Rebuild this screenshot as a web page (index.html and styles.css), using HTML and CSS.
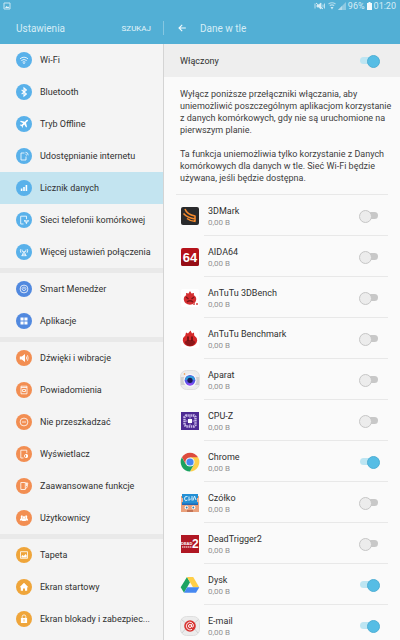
FILE: index.html
```html
<!DOCTYPE html>
<html lang="pl">
<head>
    <meta charset="UTF-8">
    <meta name="viewport" content="width=device-width, initial-scale=1.0">
    <title>Ustawienia</title>
    <link rel="stylesheet" href="styles.css">
</head>
<body>

<div class="app">
    <header class="header">
        <div class="status-bar">
            <svg class="status-icon" viewBox="0 0 8 8"><path d="M1 1h6v6H1z" fill="none" stroke="#c8e6f2"/><path d="M2 6l1.500-2 1 1 .7-.6L6.500 6z" fill="#e4f3f9"/></svg>
            <div class="status-right">
                <svg class="status-mute" viewBox="0 0 12 8"><path d="M1 1.500v5M3 3h1.500L7 1v6L4.500 5H3zM9 2.500v3M10.500 1.500v5" fill="#d8eef6" stroke="#d8eef6" stroke-width=".8"/><path d="M2 1l7 6" stroke="#d8eef6"/></svg>
                <svg class="status-icon" viewBox="0 0 8 8"><path d="M.5 2q3.500-2.500 7 0M1.800 3.700q2.200-1.600 4.400 0" fill="none" stroke="#b4dcec" stroke-width="1.100"/><path d="M2.500 5h3L4 7.500z" fill="#d0eaf4"/></svg>
                <svg class="status-icon" viewBox="0 0 8 8"><path d="M0 8l8-8v8z" fill="#8ecae2"/><path d="M0 8l4-4v4z" fill="#b4dcec"/></svg>
                <span>96%</span>
                <svg class="status-battery" viewBox="0 0 5 8"><path d="M1.500 0h2v1H5v7H0V1h1.500z" fill="#f4fafc"/></svg>
                <span>01:20</span>
            </div>
        </div>
        <div class="app-bar">
            <div class="bar-left">
                <h1>Ustawienia</h1>
                <button class="search-button" type="button">SZUKAJ</button>
            </div>
            <div class="bar-right">
                <button class="back-button" type="button" aria-label="Wstecz">
                    <svg viewBox="0 0 8 8"><path d="M7.800 4H1M4.200.8L1 4l3.200 3.200" fill="none" stroke="#f2fafd" stroke-width="1.100"/></svg>
                </button>
                <h2>Dane w tle</h2>
            </div>
        </div>
    </header>

    <div class="panes">
        <nav class="sidebar">
            <ul class="menu-group blue">
                <li><a class="menu-item" href="#wifi">
                    <svg viewBox="0 0 16 16"><path d="M4 6.800q4-3.200 8 0M5.300 8.500q2.700-2.100 5.400 0M6.600 10.200q1.400-1 2.800 0" /><circle class="solid" cx="8" cy="11.200" r=".7"/></svg>
                    <span>Wi-Fi</span></a></li>
                <li><a class="menu-item" href="#bluetooth">
                    <svg viewBox="0 0 16 16"><path d="M5.600 5.900l4.800 4.100L8 12V4l2.400 2-4.800 4.100" stroke-width="1.100"/></svg>
                    <span>Bluetooth</span></a></li>
                <li><a class="menu-item" href="#offline">
                    <svg viewBox="0 0 16 16"><path class="solid" d="M12 4q-1-.5-2 .5L8.800 5.700 4.800 4.700l-.8.800 3.200 1.800-1.500 1.500-1.300-.2-.6.600 1.700.9.900 1.700.6-.6-.2-1.300 1.500-1.500 1.900 3.200.8-.8-1-4 1.300-1.200q1-1 .7-1.600z"/></svg>
                    <span>Tryb Offline</span></a></li>
                <li><a class="menu-item" href="#tethering">
                    <svg viewBox="0 0 16 16"><path d="M8.500 5H5v7h5V8.500M9.500 6.200q1 0 1 1.300M9.500 4.300q2.700 0 2.700 3"/></svg>
                    <span>Udostępnianie internetu</span></a></li>
                <li><a class="menu-item active" href="#data">
                    <svg viewBox="0 0 16 16"><path class="solid" d="M4.800 8.500h1.600V11H4.800zM7.200 7h1.600v4H7.200zM9.600 5h1.600v6H9.600z"/></svg>
                    <span>Licznik danych</span></a></li>
                <li><a class="menu-item" href="#mobile">
                    <svg viewBox="0 0 16 16"><path d="M7.500 12H4.700V4.200h5.800v3M10.400 12V9.500M8.500 8v1.200q0 1 1.900 1t1.900-1V8M9.700 8v1.500M11.200 8v1.500"/></svg>
                    <span>Sieci telefonii komórkowej</span></a></li>
                <li><a class="menu-item" href="#more">
                    <svg viewBox="0 0 16 16"><path d="M5 5q-1.500 1.800 0 3.800M11 5q1.500 1.800 0 3.800M6.500 5.800q-.8 1 0 2.200M9.500 5.800q.8 1 0 2.200M8 7l-2 5M8 7l2 5M6.500 10.200h3M5.500 11.700h5"/></svg>
                    <span>Więcej ustawień połączenia</span></a></li>
            </ul>
            <ul class="menu-group navy">
                <li><a class="menu-item" href="#smart">
                    <svg viewBox="0 0 16 16"><circle cx="8" cy="8" r="3.900"/><path d="M7 6.200q-1.400 1-.7 2.500 1.700 1.800 3.400 0 .7-1.500-.7-2.500M8 5.500V8"/></svg>
                    <span>Smart Menedżer</span></a></li>
                <li><a class="menu-item" href="#apps">
                    <svg viewBox="0 0 16 16"><path class="solid" d="M4.500 4.500h3.100v3.100H4.500zM8.400 4.500h3.100v3.100H8.400zM4.500 8.400h3.100v3.100H4.500zM8.400 8.400h3.100v3.100H8.400z"/></svg>
                    <span>Aplikacje</span></a></li>
            </ul>
            <ul class="menu-group orange">
                <li><a class="menu-item" href="#sound">
                    <svg viewBox="0 0 16 16"><path class="solid" d="M3.800 6.500h2L9 4v8L5.800 9.500h-2z"/><path d="M10.300 6.500q.6 1.500 0 3M11.500 5.200q1.300 2.800 0 5.600"/></svg>
                    <span>Dźwięki i wibracje</span></a></li>
                <li><a class="menu-item" href="#notifications">
                    <svg viewBox="0 0 16 16"><path d="M5 4.200h6v7.600H5zM5 5.500h6M6.500 7.500h3v2h-3z"/></svg>
                    <span>Powiadomienia</span></a></li>
                <li><a class="menu-item" href="#dnd">
                    <svg viewBox="0 0 16 16"><circle cx="8" cy="8" r="3.900"/><path d="M6 8h4"/></svg>
                    <span>Nie przeszkadzać</span></a></li>
                <li><a class="menu-item" href="#display">
                    <svg viewBox="0 0 16 16"><path d="M7.500 12H4.800V4.200h6v3"/><circle cx="10" cy="10" r="1.600"/><path class="solid" d="M10 8a2 2 0 0 1 0 4z"/></svg>
                    <span>Wyświetlacz</span></a></li>
                <li><a class="menu-item" href="#advanced">
                    <svg viewBox="0 0 16 16"><path d="M4.800 4.500h4.500v7H4.800zM9.300 5h2.500L11 9.500l-1.700 1M10.500 5v3"/></svg>
                    <span>Zaawansowane funkcje</span></a></li>
                <li><a class="menu-item" href="#users">
                    <svg viewBox="0 0 16 16"><path class="solid" d="M5.500 5.200a1.200 1.200 0 0 1 1 2L6.800 8.500 5.800 10.500H3.800q0-1.800 1.200-2.300-.8-2 .5-3zM10.500 5.200a1.200 1.200 0 0 0-1 2l-.3 1.300 1 2h2q0-1.800-1.200-2.300.8-2-.5-3zM8 6a1.200 1.400 0 0 1 .6 2.500q1.400.4 1.400 2.500H6q0-2.100 1.400-2.500A1.200 1.400 0 0 1 8 6z" /></svg>
                    <span>Użytkownicy</span></a></li>
            </ul>
            <ul class="menu-group amber">
                <li><a class="menu-item" href="#wallpaper">
                    <svg viewBox="0 0 16 16"><path d="M4.500 4.700h7v6.600h-7z"/><path class="solid" d="M5.500 10.500V9l1.200-1 1 1 2-2 1 1.500v2z"/></svg>
                    <span>Tapeta</span></a></li>
                <li><a class="menu-item" href="#home">
                    <svg viewBox="0 0 16 16"><path class="solid" d="M8 3.700l4.400 4.500h-1.200v3.500H9V9.500H7v2.200H4.800V8.200H3.600z"/></svg>
                    <span>Ekran startowy</span></a></li>
                <li><a class="menu-item" href="#lock">
                    <svg viewBox="0 0 16 16"><path class="solid" d="M4.900 7h6.200v5H4.900z"/><path d="M6.200 7V5.500q0-1.600 1.800-1.600t1.800 1.600V7"/><path class="keyhole" d="M8 8.300v2.300"/></svg>
                    <span>Ekran blokady i zabezpiec...</span></a></li>
            </ul>
        </nav>

        <main class="content">
            <div class="master">
                <label for="master">Włączony</label>
                <input class="switch" type="checkbox" id="master" checked>
            </div>
            <div class="description">
                <p>Wyłącz poniższe przełączniki włączania, aby uniemożliwić poszczególnym aplikacjom korzystanie z danych komórkowych, gdy nie są uruchomione na pierwszym planie.</p>
                <p>Ta funkcja uniemożliwia tylko korzystanie z Danych komórkowych dla danych w tle. Sieć Wi-Fi będzie używana, jeśli będzie dostępna.</p>
            </div>

            <ul class="app-list">
                <li class="app-row">
                    <svg viewBox="0 0 20 20"><rect x="1" y="1" width="18" height="18" rx="2" fill="#292a2c"/><path d="M5 3q2 5.500 10 7M3.500 7.500q4 4.500 12 5.500M7 12.500q3 2.500 8.500 3M15 9.500v6" fill="none" stroke="#f58a2e" stroke-width="1.600"/></svg>
                    <div class="app-body">
                        <label for="a1"><span class="app-name">3DMark</span><span class="app-usage">0,00 B</span></label>
                        <input class="switch" type="checkbox" id="a1">
                    </div>
                </li>
                <li class="app-row">
                    <svg viewBox="0 0 20 20"><rect x="1" y="1" width="18" height="18" rx="2" fill="#b5121b"/><path d="M1 12h18v5q0 2-2 2H3q-2 0-2-2z" fill="#960d15"/><text class="logo-64" x="10" y="15">64</text></svg>
                    <div class="app-body">
                        <label for="a2"><span class="app-name">AIDA64</span><span class="app-usage">0,00 B</span></label>
                        <input class="switch" type="checkbox" id="a2">
                    </div>
                </li>
                <li class="app-row">
                    <svg viewBox="0 0 20 20"><rect x="1" y="1" width="18" height="18" rx="2" fill="#fff"/><path d="M10 3l1.500 2.500L14 5l-.2 2.200q2.700 1.300 2.400 4.600-.8 4.700-6.200 5-5.400-.3-6.200-5Q3.500 8.500 6.200 7.200L6 5l2.500.5z" fill="#d42e30"/><path d="M6 9l2.500 2M14 9l-2.500 2M7 14q3-2.500 6 0" fill="none" stroke="#7d1719" stroke-width="1.400"/><path d="M13 16h5" stroke="#e07474" stroke-width="2" stroke-dasharray="2 1"/></svg>
                    <div class="app-body">
                        <label for="a3"><span class="app-name">AnTuTu 3DBench</span><span class="app-usage">0,00 B</span></label>
                        <input class="switch" type="checkbox" id="a3">
                    </div>
                </li>
                <li class="app-row">
                    <svg viewBox="0 0 20 20"><rect x="1" y="1" width="18" height="18" rx="2" fill="#fff"/><path d="M10.500 1.500l1.500 3 2-1 .2 3q3 2 3 5-.8 5.700-7.200 6-6.400-.3-7.200-6 0-3.300 2.500-5L6 3.500l2 1z" fill="#d62a2b"/><path d="M4.500 13q1.500-2 5.500-2t5.500 2q-1.700 4-5.500 4t-5.500-4z" fill="#8c1719"/><path d="M8 7.500V12M12 7.500V12" stroke="#651012" stroke-width="1.500"/></svg>
                    <div class="app-body">
                        <label for="a4"><span class="app-name">AnTuTu Benchmark</span><span class="app-usage">0,00 B</span></label>
                        <input class="switch" type="checkbox" id="a4">
                    </div>
                </li>
                <li class="app-row">
                    <svg viewBox="0 0 20 20"><rect x=".5" y=".5" width="19" height="19" rx="6" fill="#ececec" stroke="#dfdfdf"/><path d="M1 7h18v8H1z" fill="#d0d0d1"/><circle cx="10" cy="10.300" r="6.500" fill="#f7f7fa"/><circle cx="10" cy="10.300" r="5.300" fill="#5955e8"/><path d="M4.800 10a5.300 5.300 0 0 1 10.400 0z" fill="#2f9cdb"/><path d="M6 13.600a5.300 5.300 0 0 0 8 0z" fill="#9a48f5"/><circle cx="10" cy="10.300" r="2.600" fill="#1c1752"/><circle cx="4.500" cy="4" r=".8" fill="#f08b32"/></svg>
                    <div class="app-body">
                        <label for="a5"><span class="app-name">Aparat</span><span class="app-usage">0,00 B</span></label>
                        <input class="switch" type="checkbox" id="a5">
                    </div>
                </li>
                <li class="app-row">
                    <svg viewBox="0 0 20 20"><path d="M1 1h18v18H1z" fill="#4d2a93"/><path d="M6 4.500h8l1.500 1.500v8L14 15.500H6L4.500 14V6z" fill="none" stroke="#c9b9e8" stroke-width="2.400" stroke-dasharray="1.500 .7"/><path d="M8 8h4v4H8z" fill="#fff"/><path d="M10 5.500v2M10 12.500v2M5.500 10h2M12.500 10h2" stroke="#b8a5de"/></svg>
                    <div class="app-body">
                        <label for="a6"><span class="app-name">CPU-Z</span><span class="app-usage">0,00 B</span></label>
                        <input class="switch" type="checkbox" id="a6">
                    </div>
                </li>
                <li class="app-row">
                    <svg viewBox="0 0 20 20"><path d="M10 10L1.900 5.300A9.400 9.400 0 0 1 18.100 5.300z" fill="#dd4b3e"/><path d="M10 5.300h8.100A9.400 9.400 0 0 1 10 19.400L14.100 12.300z" fill="#fdd04c"/><path d="M1.900 5.300A9.400 9.400 0 0 0 10 19.400L14.100 12.300 10 10 5.900 12.300z" fill="#1aa260"/><path d="M2 5.300L5.900 12.300 10 5.300z" fill="#dd4b3e"/><circle cx="10" cy="10" r="4.600" fill="#f4f6f8"/><circle cx="10" cy="10" r="3.600" fill="#4587f3"/></svg>
                    <div class="app-body">
                        <label for="a7"><span class="app-name">Chrome</span><span class="app-usage">0,00 B</span></label>
                        <input class="switch" type="checkbox" id="a7" checked>
                    </div>
                </li>
                <li class="app-row">
                    <svg viewBox="0 0 20 20"><path d="M1 3h18v16H1z" fill="#eaa07a"/><path d="M2 10h16v2H2z" fill="#1f68b5"/><path d="M2 1h16v9.500H2z" fill="#248fd4"/><path d="M1 5h2v4H1zM17 5h2v4h-2z" fill="#f1b392"/><path d="M7.500 3.500Q4 3 4.500 6t3 1M9 3.500v4l2-2M12 3v4.500M13 7.500l1.500-4.500L16 7" fill="none" stroke="#d9f0fb"/><circle cx="6.500" cy="14.500" r="1.900" fill="#f5f5f5"/><circle cx="13.500" cy="14.500" r="1.900" fill="#f5f5f5"/><circle cx="6.700" cy="14.500" r=".9" fill="#327eae"/><circle cx="13.300" cy="14.500" r=".9" fill="#327eae"/><path d="M7 18h6" stroke="#a8553c" stroke-width="1.200"/></svg>
                    <div class="app-body">
                        <label for="a8"><span class="app-name">Czółko</span><span class="app-usage">0,00 B</span></label>
                        <input class="switch" type="checkbox" id="a8">
                    </div>
                </li>
                <li class="app-row">
                    <svg viewBox="0 0 20 20"><path d="M1 1h18v18H1z" fill="#b01723"/><text class="logo-dead" x="1" y="11">DEAD</text><path d="M2 13h10" stroke="#e9b8bb" stroke-width="1.500" stroke-dasharray="1.500 .5"/><text class="logo-two" x="12" y="14">2</text></svg>
                    <div class="app-body">
                        <label for="a9"><span class="app-name">DeadTrigger2</span><span class="app-usage">0,00 B</span></label>
                        <input class="switch" type="checkbox" id="a9">
                    </div>
                </li>
                <li class="app-row">
                    <svg viewBox="0 0 20 20"><path d="M7 2l3 5.300-6 10.500-3.300-5.500z" fill="#1da462"/><path d="M7 2h6.200l6 10.300H13z" fill="#ffcf48"/><path d="M7.200 12.300h12.100L16 17.800H4z" fill="#4688f1"/></svg>
                    <div class="app-body">
                        <label for="a10"><span class="app-name">Dysk</span><span class="app-usage">0,00 B</span></label>
                        <input class="switch" type="checkbox" id="a10" checked>
                    </div>
                </li>
                <li class="app-row">
                    <svg viewBox="0 0 20 20"><rect x=".5" y=".5" width="19" height="19" rx="6" fill="#ececec" stroke="#dfdfdf"/><path d="M1.500 3.500L10 11l8.500-7.500M2 17l5-6M18 17l-5-6" fill="none" stroke="#d2d2d2"/><circle cx="10" cy="10" r="5.800" fill="#d83431"/><circle cx="10" cy="10" r="1.500" fill="none" stroke="#fff"/><path d="M11.700 8v2.500q.2 1 1.200.5 1-1 .3-2.700Q12 6 9.500 6.200 6.500 6.800 6.200 10q.3 3.500 3.600 3.900 1.200 0 2.200-.6" fill="none" stroke="#fff" stroke-width=".9"/></svg>
                    <div class="app-body">
                        <label for="a11"><span class="app-name">E-mail</span><span class="app-usage">0,00 B</span></label>
                        <input class="switch" type="checkbox" id="a11" checked>
                    </div>
                </li>
            </ul>
        </main>
    </div>
</div>

</body>
</html>
```
FILE: styles.css
```css
* {
    box-sizing: border-box;
}
body {
    margin: 0;
    font-family: Roboto, "Noto Sans", sans-serif;
    font-size: 9px;
    color: #303030;
    background: #fafafa;
}
h1, h2, p, ul {
    margin: 0;
    padding: 0;
}
ul {
    list-style: none;
}
svg {
    display: block;
    flex: none;
}
button {
    padding: 0;
    border: 0;
    background: none;
    font-family: inherit;
    color: #e6f5fa;
}
.app {
    display: flex;
    flex-direction: column;
    height: 100vh;
}

/* Header */
.header {
    background: #52afd5;
    color: #d6edf6;
}
.status-bar {
    display: flex;
    align-items: center;
    justify-content: space-between;
    height: 12px;
    padding: 0 4px 0 3px;
}
.status-right {
    display: flex;
    align-items: center;
    gap: 2px;
}
.status-icon {
    width: 8px;
    height: 8px;
}
.status-mute {
    width: 12px;
    height: 8px;
}
.status-battery {
    width: 5px;
    height: 8px;
}
.app-bar,
.panes {
    display: grid;
    grid-template-columns: 41fr 59fr;
}
.app-bar {
    height: 32px;
    align-items: center;
}
.bar-left {
    display: flex;
    align-items: center;
    justify-content: space-between;
    height: 14px;
    padding: 0 12px 0 16px;
    border-right: 1px solid #86c7e1;
}
.bar-right {
    display: flex;
    align-items: center;
    gap: 14px;
    padding-left: 14px;
}
h1, h2 {
    font-size: 10px;
    font-weight: 400;
}
.search-button {
    font-size: 8px;
}
.back-button svg {
    width: 8px;
    height: 8px;
}

/* Left pane */
.panes {
    flex: 1;
    min-height: 0;
}
.sidebar,
.content {
    min-width: 0;
    overflow-y: auto;
    scrollbar-width: none;
}
.sidebar {
    background: #f4f4f4;
    border-right: 1px solid #d4d4d4;
}
.menu-group + .menu-group {
    border-top: 5px solid #e9e9e9;
}
.menu-item {
    display: flex;
    align-items: center;
    gap: 8px;
    height: 32px;
    padding: 0 8px 0 16px;
    color: #303030;
    text-decoration: none;
    white-space: nowrap;
}
.menu-item.active {
    background: #c3e4f0;
}
.menu-item svg {
    width: 16px;
    height: 16px;
    border-radius: 50%;
    fill: none;
    stroke: #fff;
    stroke-width: 0.8;
}
.menu-item .solid {
    fill: #fff;
    stroke: none;
}
.blue svg {
    background: #59b1ea;
}
.navy svg {
    background: #5189df;
}
.orange svg {
    background: #f28e52;
}
.amber svg {
    background: #efa53a;
}
.menu-item .keyhole {
    stroke: #efa53a;
}

/* Right pane */
.master {
    display: flex;
    align-items: center;
    justify-content: space-between;
    height: 33px;
    padding: 0 22px 0 16px;
    background: #eee;
}
.description {
    padding: 11px 8px 10px 16px;
    line-height: 12px;
    color: #404040;
}
.description p + p {
    margin-top: 12px;
}
.app-list {
    margin: 0 12px;
    border-top: 1px solid #e8e8e8;
}
.app-row {
    display: flex;
    align-items: center;
    gap: 4px;
    height: 41px;
    padding-left: 4px;
}
.app-row > svg {
    width: 20px;
    height: 20px;
}
.app-body {
    display: flex;
    flex: 1;
    align-items: center;
    justify-content: space-between;
    height: 41px;
    padding: 0 10px 0 4px;
    border-bottom: 1px solid #e8e8e8;
}
.app-body label {
    padding-top: 3px;
}
.app-name,
.app-usage {
    display: block;
    line-height: 11px;
}
.app-usage {
    font-size: 8px;
    color: #929292;
}
.logo-64 {
    font: bold 13px "Liberation Sans", sans-serif;
    fill: #fff;
    text-anchor: middle;
}
.logo-dead {
    font: bold 4px "Liberation Sans", sans-serif;
    fill: #fff;
}
.logo-two {
    font: bold 12px "Liberation Sans", sans-serif;
    fill: #fff;
}

/* Switches */
.switch {
    appearance: none;
    position: relative;
    flex: none;
    width: 18px;
    height: 7px;
    margin: 0;
    border-radius: 4px;
    background: #c8c8c8;
}
.switch::after {
    content: "";
    position: absolute;
    top: -2px;
    left: -1px;
    width: 11px;
    height: 11px;
    border: 1px solid #c6c6c6;
    border-radius: 50%;
    background: #ececec;
}
.switch:checked {
    background: #bde5f2;
}
.switch:checked::after {
    left: 7px;
    border-color: #4fafd4;
    background: #56bde5;
}
```
